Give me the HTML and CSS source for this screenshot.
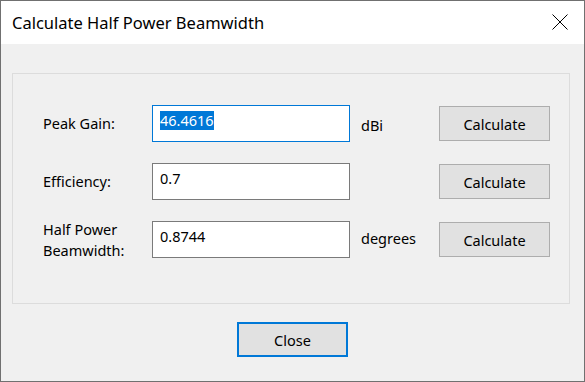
FILE: index.html
```html
<!DOCTYPE html>
<html lang="en">
<head>
  <meta charset="UTF-8">
  <title>Calculate Half Power Beamwidth</title>
  <link rel="stylesheet" href="styles.css">
</head>
<body>
  <div class="window">
    <div class="titlebar">
      <span class="title">Calculate Half Power Beamwidth</span>
      <span class="close-x">
        <svg width="16" height="16" viewBox="0 0 16 16">
          <path d="M0.5 0.5 L15.5 15.5 M15.5 0.5 L0.5 15.5" stroke="#000" stroke-width="1" fill="none"/>
        </svg>
      </span>
    </div>
    <div class="content">
      <div class="groupbox">
        <div class="label">Peak Gain:</div>
        <div class="field focused"><span class="selected">46.4616</span></div>
        <div class="unit unit-low">dBi</div>
        <button class="btn">Calculate</button>

        <div class="label">Efficiency:</div>
        <div class="field">0.7</div>
        <div class="unit"></div>
        <button class="btn">Calculate</button>

        <div class="label">Half Power<br>Beamwidth:</div>
        <div class="field">0.8744</div>
        <div class="unit">degrees</div>
        <button class="btn">Calculate</button>
      </div>
      <div class="footer">
        <button class="btn btn-default">Close</button>
      </div>
    </div>
  </div>
</body>
</html>
```

FILE: styles.css
```css
body {
  margin: 0;
  padding: 0;
  background: #ffffff;
  font-family: "Noto Sans", "Open Sans", sans-serif;
  color: #000000;
}

.window {
  width: 585px;
  height: 382px;
  box-sizing: border-box;
  border: 1px solid #707070;
  background: #f0f0f0;
  display: flex;
  flex-direction: column;
}

.titlebar {
  height: 43px;
  background: #ffffff;
  display: flex;
  align-items: center;
  justify-content: space-between;
  padding: 0 16px 0 11px;
}

.title {
  font-size: 16.5px;
  margin-top: -1px;
}

.close-x {
  display: flex;
  margin-top: -1px;
}

.content {
  flex: 1;
  padding: 29px 14px 0 11px;
}

.groupbox {
  border: 1px solid #dcdcdc;
  display: grid;
  grid-template-columns: 109px 198px 89px 111px;
  grid-auto-rows: 37px;
  row-gap: 21px;
  align-items: center;
  align-content: start;
  padding: 31px 0 0 30px;
  box-sizing: border-box;
  height: 231px;
}

.label {
  font-size: 14.5px;
  line-height: 21px;
}

.field {
  height: 37px;
  box-sizing: border-box;
  background: #ffffff;
  border: 1px solid #7a7a7a;
  font-size: 14.5px;
  line-height: 20px;
  padding: 4px 6px 0 7px;
}

.field.focused {
  border-color: #0078d7;
}

.selected {
  background: #0078d7;
  color: #ffffff;
  display: inline-block;
  line-height: 19px;
}

.unit {
  font-size: 14.5px;
  padding-left: 11px;
  margin-top: -4px;
}

.unit.unit-low {
  margin-top: 3px;
}

.btn {
  width: 111px;
  height: 35px;
  background: #e1e1e1;
  border: 1px solid #adadad;
  font-family: "Noto Sans", "Open Sans", sans-serif;
  font-size: 14.5px;
  color: #000000;
  padding: 0;
}

.footer {
  display: flex;
  justify-content: center;
  padding-top: 18px;
  padding-left: 3px;
}

.btn-default {
  border: 2px solid #0078d7;
}
```
